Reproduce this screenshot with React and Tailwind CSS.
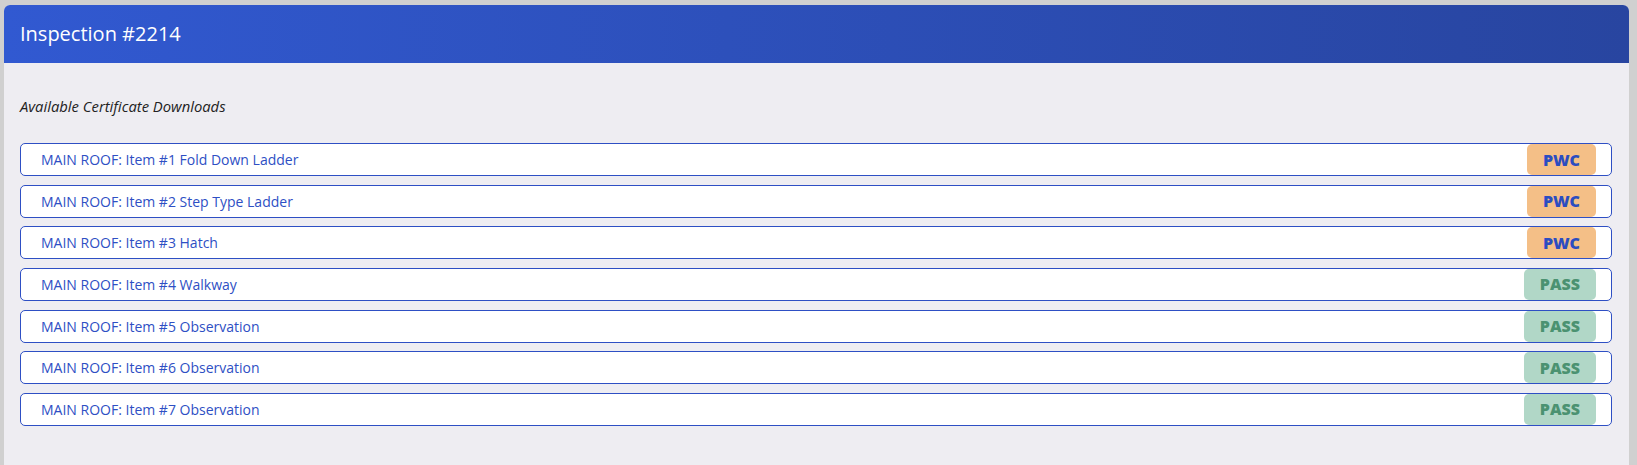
const items = [
  { name: "MAIN ROOF: Item #1 Fold Down Ladder", status: "PWC" },
  { name: "MAIN ROOF: Item #2 Step Type Ladder", status: "PWC" },
  { name: "MAIN ROOF: Item #3 Hatch", status: "PWC" },
  { name: "MAIN ROOF: Item #4 Walkway", status: "PASS" },
  { name: "MAIN ROOF: Item #5 Observation", status: "PASS" },
  { name: "MAIN ROOF: Item #6 Observation", status: "PASS" },
  { name: "MAIN ROOF: Item #7 Observation", status: "PASS" },
];

function StatusBadge({ status }) {
  const pass = status === "PASS";
  return (
    <span
      className={
        "flex h-full items-center rounded-[5px] px-4 text-[16px] font-extrabold " +
        (pass ? "bg-[#b1d7c7] text-[#4b9271]" : "bg-[#f4bf87] text-[#2b4dc1]")
      }
    >
      {status}
    </span>
  );
}

export default function App() {
  return (
    <div
      className="h-[465px] overflow-hidden bg-[#d0d0d0] pl-[4px] pt-[5px]"
      style={{ fontFamily: '"Open Sans", "Noto Sans", sans-serif' }}
    >
      <div className="h-[480px] w-[1625px] rounded-md bg-[#eeedf2]">
        <div className="flex h-[58px] items-center rounded-t-md bg-gradient-to-r from-[#3159d1] to-[#2845a0] px-4 text-[20px] text-white">
          Inspection #2214
        </div>
        <div className="px-4 pt-[33px]">
          <p className="text-[14.8px] leading-[20px] italic text-[#222]">Available Certificate Downloads</p>
          <div className="mt-[27px] flex w-[1592px] flex-col gap-[8.66px]">
            {items.map((item) => (
              <a
                key={item.name}
                href="#"
                className="flex h-[33px] items-center justify-between rounded-[5px] border border-[#2e4fc4] bg-white pr-[15px] pl-5 text-[14px] text-[#2e4fc4]"
              >
                <span>{item.name}</span>
                <StatusBadge status={item.status} />
              </a>
            ))}
          </div>
        </div>
      </div>
    </div>
  );
}
